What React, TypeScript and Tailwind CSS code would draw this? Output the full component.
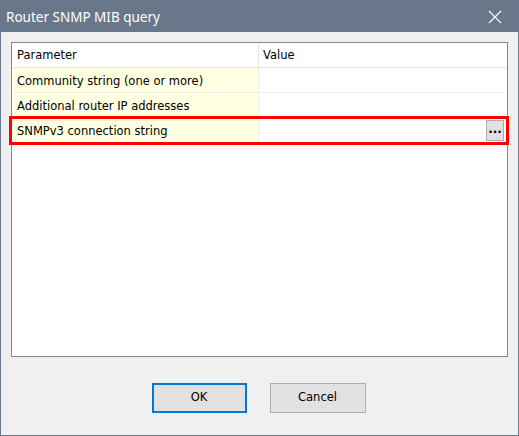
import React from 'react';

const rows = [
  'Community string (one or more)',
  'Additional router IP addresses',
  'SNMPv3 connection string',
];

export default function App() {
  return (
    <div className="w-[519px] h-[436px] flex flex-col bg-[#687789] p-[1px] pt-0 overflow-hidden" style={{ fontFamily: '"DejaVu Sans", Verdana, sans-serif' }}>
      <div className="h-[32px] shrink-0 flex items-center justify-between pl-[5px] pr-[14px] pt-[2px]">
        <span className="text-white text-[13.5px]" style={{ fontFamily: '"Noto Sans", "Open Sans", sans-serif' }}>Router SNMP MIB query</span>
        <svg width="14" height="14" viewBox="0 0 14 14" className="mr-[2px]">
          <path d="M1 1 L13 13 M13 1 L1 13" stroke="white" strokeWidth="1.2" />
        </svg>
      </div>
      <div className="flex-1 bg-[#f0f0f0] flex flex-col px-[10px] pt-[10px] pb-[22px]">
        <div className="h-[315px] border border-[#828790] bg-white flex flex-col text-[11.5px] text-black">
          <div className="h-[25px] flex border-b border-[#e5e5e5]">
            <div className="w-[247px] border-r border-[#e5e5e5] pl-[5px] pt-[2px] flex items-center">Parameter</div>
            <div className="flex-1 pl-[4px] pt-[2px] flex items-center">Value</div>
          </div>
          {rows.map((r, i) => (
            <div key={r} className="relative h-[25px] flex border-b border-[#f0f0f0]">
              <div className="w-[247px] bg-[#ffffe1] border-r border-[#f0f0f0] pl-[5px] pt-[3px] flex items-center">{r}</div>
              <div className="flex-1 flex items-center justify-end pr-[3px]">
                {i === 2 && (
                  <div className="w-[18px] h-[21px] bg-[#e1e1e1] border border-[#adadad] flex items-center justify-center text-[12px] font-bold leading-none pb-[3px]">...</div>
                )}
              </div>
              {i === 2 && (
                <div className="absolute left-[-3px] right-[-2px] top-[-2px] bottom-[-3px] border-[3px] border-[#ff0000] pointer-events-none" />
              )}
            </div>
          ))}
        </div>
        <div className="flex-1 flex items-end justify-center gap-[23px] pr-[2px]">
          <button className="w-[95px] h-[30px] bg-[#e1e1e1] border-2 border-[#0078d7] text-[11.5px] text-black">OK</button>
          <button className="w-[96px] h-[30px] bg-[#e1e1e1] border border-[#adadad] text-[11.5px] text-black">Cancel</button>
        </div>
      </div>
    </div>
  );
}
